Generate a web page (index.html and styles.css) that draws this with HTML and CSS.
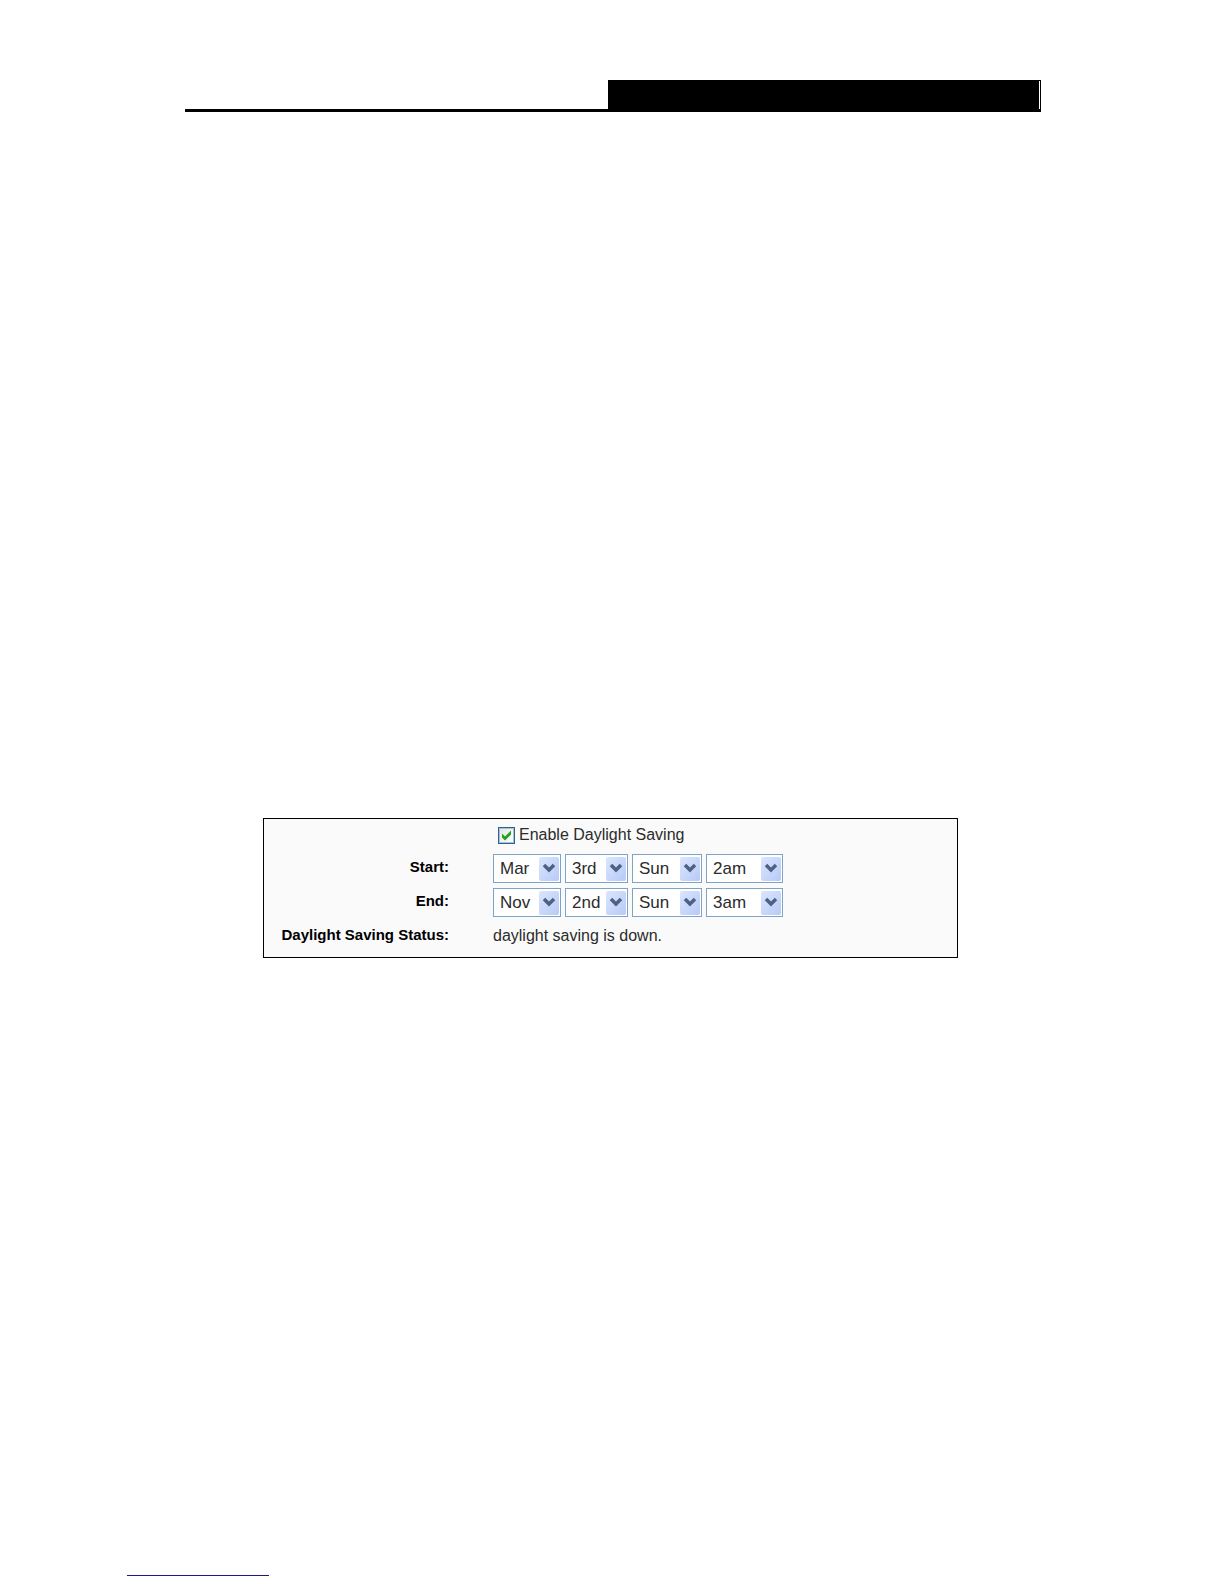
FILE: index.html
```html
<!DOCTYPE html>
<html lang="en">
<head>
<meta charset="utf-8">
<title>Daylight Saving</title>
<link rel="stylesheet" href="styles.css">
</head>
<body>
<svg width="0" height="0" class="defs">
  <defs>
    <linearGradient id="arrow-bg" x1="0" y1="0" x2="1" y2="1">
      <stop offset="0" stop-color="#dbe5fd"/>
      <stop offset="1" stop-color="#b7caf6"/>
    </linearGradient>
    <symbol id="arrow" viewBox="0 0 20 24">
      <rect width="20" height="24" rx="2" fill="url(#arrow-bg)"/>
      <path d="M5 8L10 13L15 8" fill="none" stroke="#4d6185" stroke-width="3.500"/>
    </symbol>
  </defs>
</svg>
<div class="page">
  <header class="header"><div class="header-block"></div></header>
  <form class="panel">
    <div class="row row-first">
      <div class="field check">
        <span class="box">
          <input type="checkbox" id="dst" checked>
          <svg viewBox="0 0 17 17"><path d="M4 6.500L7 9.500L13 3.500V7.500L7 13.500L4 10.500Z" fill="#21a121"/></svg>
        </span>
        <label for="dst">Enable Daylight Saving</label>
      </div>
    </div>
    <div class="row">
      <label class="tit" for="start-month">Start:</label>
      <div class="field">
        <span class="select month"><select id="start-month"><option>Mar</option><option>Nov</option></select><svg><use href="#arrow"/></svg></span>
        <span class="select week"><select aria-label="Start week"><option>3rd</option><option>2nd</option></select><svg><use href="#arrow"/></svg></span>
        <span class="select day"><select aria-label="Start day"><option>Sun</option></select><svg><use href="#arrow"/></svg></span>
        <span class="select hour"><select aria-label="Start hour"><option>2am</option><option>3am</option></select><svg><use href="#arrow"/></svg></span>
      </div>
    </div>
    <div class="row">
      <label class="tit" for="end-month">End:</label>
      <div class="field">
        <span class="select month"><select id="end-month"><option>Nov</option><option>Mar</option></select><svg><use href="#arrow"/></svg></span>
        <span class="select week"><select aria-label="End week"><option>2nd</option><option>3rd</option></select><svg><use href="#arrow"/></svg></span>
        <span class="select day"><select aria-label="End day"><option>Sun</option></select><svg><use href="#arrow"/></svg></span>
        <span class="select hour"><select aria-label="End hour"><option>3am</option><option>2am</option></select><svg><use href="#arrow"/></svg></span>
      </div>
    </div>
    <div class="row">
      <span class="tit">Daylight Saving Status:</span>
      <div class="field">daylight saving is down.</div>
    </div>
  </form>
  <footer class="footer"><hr class="footer-line"></footer>
</div>
</body>
</html>
```
FILE: styles.css
```css
body {
	margin:0;
	background:#fff;
	color:#2b2b2b;
	font:16px/20px "Liberation Sans", Arial, sans-serif;
}
.defs {
	position:absolute;
}
.page {
	display:flex;
	flex-direction:column;
	box-sizing:border-box;
	min-height:100vh;
	padding:80px 183px 8px 185px;
}
/* header rule with the black title block on the right */
.header {
	display:flex;
	justify-content:flex-end;
	border-bottom:3px solid #000;
}
.header-block {
	box-sizing:border-box;
	width:433px;
	height:29px;
	padding:1px 1px 0 0;
	background:#000;
}
.header-block:after {
	content:"";
	display:block;
	height:28px;
	border-right:1px solid #fff;
}
/* settings panel */
.panel {
	margin:706px 83px 0 78px;
	padding-bottom:4px;
	border:1px solid #000;
	background:#fafafa;
}
.row {
	display:grid;
	grid-template-columns:185px 1fr;
	column-gap:44px;
	align-items:center;
	height:34px;
}
.row-first {
	height:32px;
}
.tit {
	padding-bottom:2px;
	color:#000;
	font-size:15px;
	font-weight:bold;
	text-align:right;
}
.field {
	display:flex;
	grid-column:2;
	gap:4px;
}
.check {
	align-items:center;
	padding-left:5px;
}
.box {
	position:relative;
	width:17px;
	height:17px;
}
.box input {
	-webkit-appearance:none;
	appearance:none;
	display:block;
	box-sizing:border-box;
	width:17px;
	height:17px;
	margin:0;
	border:1px solid #2f6291;
	background:linear-gradient(135deg, #e4e4e0, #fff);
	box-shadow:inset 0 0 0 1px #a9c1d6;
}
.box svg {
	position:absolute;
	top:0;
	left:0;
	width:17px;
	height:17px;
	pointer-events:none;
}
.box input:not(:checked) + svg {
	display:none;
}
.select {
	position:relative;
}
.select select {
	-webkit-appearance:none;
	appearance:none;
	display:block;
	box-sizing:border-box;
	width:100%;
	height:29px;
	margin:0;
	padding:2px 0 0 6px;
	border:1px solid #7fa3c7;
	border-radius:0;
	background:#fff;
	color:#2b2b2b;
	font:17px/20px "Liberation Sans", Arial, sans-serif;
}
.select svg {
	position:absolute;
	top:3px;
	right:2px;
	width:20px;
	height:24px;
	pointer-events:none;
}
.month {
	width:68px;
}
.week {
	width:63px;
}
.day {
	width:70px;
}
.hour {
	width:77px;
}
.footer {
	margin:auto 0 0 -58px;
}
.footer-line {
	width:142px;
	height:1px;
	margin:0;
	border:0;
	background:#1a1a80;
}
```
